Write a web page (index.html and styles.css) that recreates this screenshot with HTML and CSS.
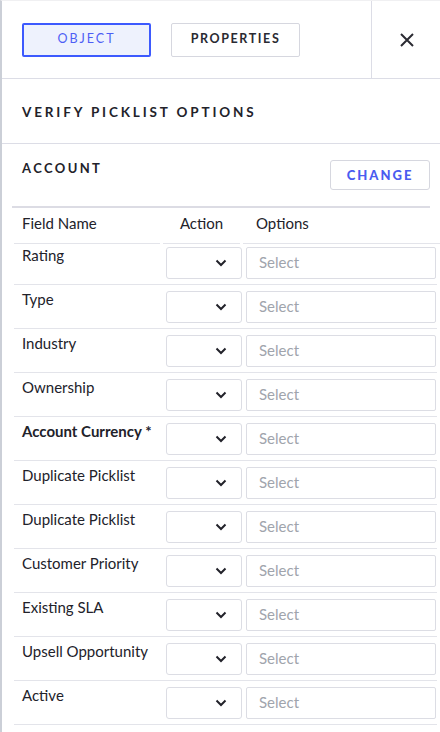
FILE: index.html
```html
<!DOCTYPE html>
<html lang="en">
<head>
    <meta charset="UTF-8">
    <meta name="viewport" content="width=device-width, initial-scale=1.0">
    <title>Verify Picklist Options</title>
    <link rel="stylesheet" href="styles.css">
</head>
<body>
    <div class="panel">
        <!-- Tabs + close -->
        <div class="panel-header">
            <div class="tabs">
                <button class="tab active">OBJECT</button>
                <button class="tab">PROPERTIES</button>
            </div>
            <button class="close" aria-label="Close">
                <svg width="16" height="16" viewBox="0 0 16 16">
                    <path d="M2 2 L14 14 M14 2 L2 14" stroke="#2b2b33" stroke-width="2" fill="none"/>
                </svg>
            </button>
        </div>

        <h3 class="section-title">VERIFY PICKLIST OPTIONS</h3>

        <!-- Object picker -->
        <div class="object-row">
            <span class="object-name">ACCOUNT</span>
            <button class="change-btn">CHANGE</button>
        </div>
        <div class="divider"></div>

        <!-- Picklist fields -->
        <div class="fields">
            <div class="fields-head">
                <div class="col-name">Field Name</div>
                <div class="col-action">Action</div>
                <div class="col-options">Options</div>
            </div>
            <div id="field-rows"></div>
        </div>
    </div>

    <script>
        const fields = [
            { name: 'Rating' },
            { name: 'Type' },
            { name: 'Industry' },
            { name: 'Ownership' },
            { name: 'Account Currency *', required: true },
            { name: 'Duplicate Picklist' },
            { name: 'Duplicate Picklist' },
            { name: 'Customer Priority' },
            { name: 'Existing SLA' },
            { name: 'Upsell Opportunity' },
            { name: 'Active' }
        ];

        const chevron = `
            <svg width="12" height="8" viewBox="0 0 12 8">
                <path d="M1.5 1.5 L6 6 L10.5 1.5" stroke="#22222a" stroke-width="2" fill="none"/>
            </svg>`;

        const rows = document.getElementById('field-rows');
        fields.forEach(field => {
            const row = document.createElement('div');
            row.className = 'field-row';
            row.innerHTML = `
                <div class="field-name${field.required ? ' required' : ''}">${field.name}</div>
                <div class="action-select">${chevron}</div>
                <input class="options-input" type="text" placeholder="Select">
            `;
            rows.appendChild(row);
        });
    </script>
</body>
</html>
```

FILE: styles.css
```css
body {
    margin: 0;
    font-family: Lato, "Noto Sans", sans-serif;
    color: #22222a;
    background: #fff;
}

.panel {
    width: 440px;
    height: 732px;
    border-left: 2px solid #cbcfd7;
    border-top: 1px solid #f0f0f2;
    box-sizing: border-box;
    overflow: hidden;
}

/* Header */
.panel-header {
    display: flex;
    height: 77px;
    border-bottom: 1px solid #dcdde6;
}

.tabs {
    display: flex;
    align-items: center;
    gap: 20px;
    width: 349px;
    padding-left: 20px;
    border-right: 1px solid #dcdde6;
}

.tab {
    width: 129px;
    height: 34px;
    padding: 0 0 3px;
    font-family: Lato, sans-serif;
    font-size: 12.5px;
    font-weight: 700;
    letter-spacing: 1.6px;
    color: #2a2a32;
    background: #fff;
    border: 1px solid #d6d7df;
    border-radius: 2px;
    cursor: pointer;
}

.tab.active {
    color: #4d5ef5;
    font-weight: 400;
    letter-spacing: 2px;
    background: #eef2fd;
    border: 2px solid #3d5afe;
}

.close {
    flex: 1;
    display: flex;
    align-items: center;
    justify-content: center;
    background: none;
    border: none;
    padding: 0 0 0 2px;
    cursor: pointer;
}

/* Titles */
.section-title {
    margin: 0;
    height: 64px;
    line-height: 66px;
    padding-left: 20px;
    font-size: 13.5px;
    font-weight: 700;
    letter-spacing: 2.85px;
    border-bottom: 1px solid #dcdde6;
}

.object-row {
    display: flex;
    justify-content: space-between;
    align-items: flex-start;
    padding: 16px 10px 16px 20px;
}

.object-name {
    margin-top: 1px;
    font-size: 13px;
    font-weight: 700;
    letter-spacing: 2.4px;
    line-height: 14px;
}

.change-btn {
    width: 100px;
    height: 30px;
    font-family: Lato, sans-serif;
    font-size: 13px;
    font-weight: 900;
    letter-spacing: 2px;
    color: #4a5cf0;
    background: #fff;
    border: 1px solid #d6d7df;
    border-radius: 3px;
    cursor: pointer;
}

.divider {
    height: 2px;
    margin: 0 10px;
    background: #dcdce4;
}

/* Field table */
.fields {
    margin-left: 12px;
    width: 423px;
    font-size: 15px;
}

.fields-head {
    display: grid;
    grid-template-columns: 146px 77px 1fr;
    column-gap: 3px;
    margin-right: -3px;
}

.fields-head > div {
    height: 35px;
    line-height: 31px;
    border-bottom: 1px solid #e3e4ea;
}

.col-name { padding-left: 8px; }
.col-action { text-align: center; }
.col-options { padding-left: 13px; }

.field-row {
    display: grid;
    grid-template-columns: 149px 80px 1fr;
    align-items: start;
    height: 44px;
    padding-top: 6px;
    box-sizing: border-box;
    border-bottom: 1px solid #e3e4ea;
}

.field-row:first-child {
    height: 41px;
    padding-top: 3px;
}

.field-name {
    padding-left: 8px;
    line-height: 16px;
    color: #22222a;
}

.field-name.required {
    font-weight: 700;
}

.action-select {
    width: 76px;
    height: 32px;
    margin-left: 3px;
    box-sizing: border-box;
    border: 1px solid #dcdde4;
    border-radius: 3px;
    display: flex;
    align-items: center;
    justify-content: flex-end;
    padding-right: 14px;
}

.options-input {
    width: 190px;
    height: 32px;
    margin-left: 3px;
    box-sizing: border-box;
    border: 1px solid #dcdde4;
    border-radius: 2px;
    padding: 0 12px 2px;
    font-family: Lato, sans-serif;
    font-size: 15px;
    outline: none;
}

.options-input::placeholder {
    color: #a0a4ac;
}
```
